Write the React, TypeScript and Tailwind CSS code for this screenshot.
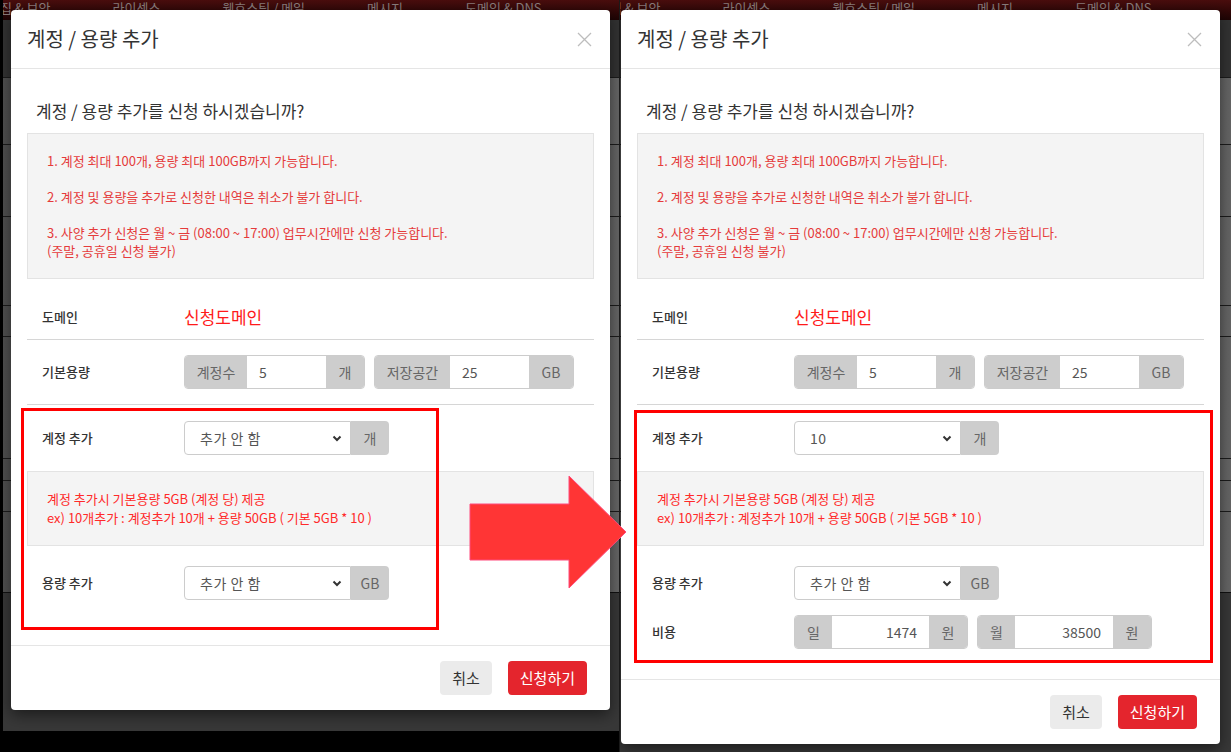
import React from "react";

// ---------------------------------------------------------------------------
// Static data
// ---------------------------------------------------------------------------

const NAV_ITEMS = ["집 & 보안", "라이센스", "웹호스팅 / 메일", "메시지", "도메인 & DNS"];

/** Heights of the darkened page bands behind the modal (px). */
const PAGE_BANDS = [67, 72, 89, 31, 122, 22, 31, 81];

const NOTICE_LINES = [
  "1. 계정 최대 100개, 용량 최대 100GB까지 가능합니다.",
  "",
  "2. 계정 및 용량을 추가로 신청한 내역은 취소가 불가 합니다.",
  "",
  "3. 사양 추가 신청은 월 ~ 금 (08:00 ~ 17:00) 업무시간에만 신청 가능합니다.",
  "(주말, 공휴일 신청 불가)",
];

const ACCOUNT_NOTE = [
  "계정 추가시 기본용량 5GB (계정 당) 제공",
  "ex) 10개추가 : 계정추가 10개 + 용량 50GB ( 기본 5GB * 10 )",
];

// ---------------------------------------------------------------------------
// Small pieces
// ---------------------------------------------------------------------------

function Addon({ className, children }: { className: string; children: React.ReactNode }) {
  return (
    <div className={"flex items-center justify-center bg-[#cdcdcd] text-[14px] text-[#666] " + className}>
      {children}
    </div>
  );
}

function Chevron() {
  return (
    <svg width="10" height="7" viewBox="0 0 10 7" className="shrink-0">
      <polyline points="1.5,1.5 5,5 8.5,1.5" fill="none" stroke="#333" strokeWidth="2" />
    </svg>
  );
}

function SelectGroup({ value, unit }: { value: string; unit: string }) {
  return (
    <div className="flex h-[34px]">
      <div className="flex w-[167px] items-center justify-between rounded-l-[4px] border border-[#cccccc] bg-white pl-[15px] pr-[8px] text-[14px] text-[#555]">
        <span className="tracking-[0.5px]">{value}</span>
        <Chevron />
      </div>
      <Addon className="w-[38px] rounded-r-[4px]">{unit}</Addon>
    </div>
  );
}

function Row({ label, className, children }: { label: string; className: string; children: React.ReactNode }) {
  return (
    <div className={"flex items-center " + className}>
      <div className="w-[157px] shrink-0 pl-[15px] text-[13px] font-medium text-[#333]">{label}</div>
      {children}
    </div>
  );
}

function Backdrop({ navShift }: { navShift: string }) {
  return (
    <div className="flex h-full flex-col">
      <div className="h-[20px] shrink-0 overflow-hidden bg-gradient-to-b from-[#4a0e0e] to-[#1e0404]">
        <div className={"flex gap-[62px] whitespace-nowrap pt-[1px] text-[13px] leading-[13px] text-[#8a7d7d] " + navShift}>
          {NAV_ITEMS.map((item) => (
            <span key={item}>{item}</span>
          ))}
        </div>
      </div>
      <div className="h-[57px] shrink-0 bg-[#333333]" />
      {PAGE_BANDS.map((h, i) => (
        <div
          key={i}
          className="shrink-0 border-t border-[#1c1c1c] bg-gradient-to-r from-[#505050] to-[#666666]"
          style={{ height: h }}
        />
      ))}
      <div className="flex-1 border-t border-[#111] bg-[#383838]" />
    </div>
  );
}

// ---------------------------------------------------------------------------
// Modal
// ---------------------------------------------------------------------------

function Modal({ after }: { after: boolean }) {
  return (
    <div className="relative w-[599px] rounded-[4px] bg-white shadow-[0_5px_15px_rgba(0,0,0,0.5)]">
      {/* header */}
      <div className="flex h-[59px] items-center justify-between border-b border-[#e5e5e5] pl-[16px] pr-[18px]">
        <div className="pb-[1px] text-[20px] text-[#333]">계정 / 용량 추가</div>
        <svg width="15" height="15" viewBox="0 0 15 15">
          <path d="M1 1 L14 14 M14 1 L1 14" stroke="#bdbdbd" strokeWidth="1.3" />
        </svg>
      </div>

      {/* body */}
      <div className={"px-[16px] pt-[29px] " + (after ? "pb-[30px]" : "pb-[45px]")}>
        <div className="pl-[9px] text-[17px] leading-[26px] text-[#333]">계정 / 용량 추가를 신청 하시겠습니까?</div>

        <div className="mt-[9px] border border-[#e3e3e3] bg-[#f4f4f4] px-[19px] py-[18px] text-[13px] leading-[18px] text-[#e53b3b]">
          {NOTICE_LINES.map((line, i) => (
            <div key={i} className="h-[18px]">
              {line}
            </div>
          ))}
        </div>

        <div className="mt-[15px]">
          <Row label="도메인" className="h-[46px] border-b border-[#d6d6d6]">
            <span className="text-[17px] text-[#ff1a1a]">신청도메인</span>
          </Row>

          <Row label="기본용량" className="h-[65px] border-b border-[#d6d6d6]">
            <div className="flex gap-[9px]">
              <div className="flex h-[34px] overflow-hidden rounded-[4px] border border-[#cccccc]">
                <Addon className="w-[62px]">계정수</Addon>
                <div className="flex w-[79px] items-center bg-white pl-[12px] text-[14px] text-[#555]">5</div>
                <Addon className="w-[38px]">개</Addon>
              </div>
              <div className="flex h-[34px] overflow-hidden rounded-[4px] border border-[#cccccc]">
                <Addon className="w-[75px]">저장공간</Addon>
                <div className="flex w-[79px] items-center bg-white pl-[12px] text-[14px] text-[#555]">25</div>
                <Addon className="w-[44px]">GB</Addon>
              </div>
            </div>
          </Row>

          <Row label="계정 추가" className="h-[66px]">
            <SelectGroup value={after ? "10" : "추가 안 함"} unit="개" />
          </Row>

          <div className="border border-[#e3e3e3] bg-[#f4f4f4] px-[19px] py-[18px] text-[13px] leading-[18.5px] text-[#ff2a2a]">
            {ACCOUNT_NOTE.map((line) => (
              <div key={line}>{line}</div>
            ))}
          </div>

          <Row label="용량 추가" className="mt-[20px]">
            <SelectGroup value="추가 안 함" unit="GB" />
          </Row>

          {after && (
            <Row label="비용" className="mt-[15px]">
              <div className="flex gap-[9px]">
                <div className="flex h-[34px] overflow-hidden rounded-[4px] border border-[#cccccc]">
                  <Addon className="w-[37px]">일</Addon>
                  <div className="flex w-[97px] items-center justify-end bg-white pr-[12px] text-[14px] text-[#555]">1474</div>
                  <Addon className="w-[38px]">원</Addon>
                </div>
                <div className="flex h-[34px] overflow-hidden rounded-[4px] border border-[#cccccc]">
                  <Addon className="w-[37px]">월</Addon>
                  <div className="flex w-[98px] items-center justify-end bg-white pr-[12px] text-[14px] text-[#555]">38500</div>
                  <Addon className="w-[38px]">원</Addon>
                </div>
              </div>
            </Row>
          )}
        </div>
      </div>

      {/* footer */}
      <div className="flex h-[65px] items-center justify-end gap-[16px] border-t border-[#e5e5e5] pr-[23px]">
        <button className="h-[34px] rounded-[4px] bg-[#ebebeb] px-[12px] text-[15px] text-[#333]">취소</button>
        <button className="h-[34px] rounded-[4px] bg-[#e4252d] px-[12px] text-[15px] text-white">신청하기</button>
      </div>

      {/* annotation box */}
      {after ? (
        <div className="absolute left-[13px] top-[400px] h-[253px] w-[579px] border-[3px] border-[#ff0000]" />
      ) : (
        <div className="absolute left-[10px] top-[398px] h-[222px] w-[418px] border-[3px] border-[#ff0000]" />
      )}
    </div>
  );
}

// ---------------------------------------------------------------------------
// Page
// ---------------------------------------------------------------------------

export default function App() {
  return (
    <div className="relative flex h-[752px] w-[1231px] items-start overflow-hidden bg-black pl-[3px] font-['Noto_Sans_CJK_KR','Noto_Sans',sans-serif]">
      {/* before */}
      <div className="relative h-[731px] w-[616px] shrink-0 overflow-hidden">
        <Backdrop navShift="-ml-[3px]" />
        <div className="absolute left-[8px] top-[10px]">
          <Modal after={false} />
        </div>
      </div>

      {/* after */}
      <div className="relative h-[752px] w-[612px] shrink-0 overflow-hidden border-l border-[#1a1a1a]">
        <Backdrop navShift="-ml-[10px]" />
        <div className="absolute left-[1px] top-[10px]">
          <Modal after />
        </div>
      </div>

      {/* arrow */}
      <svg className="absolute left-[468px] top-[474px]" width="160" height="116" viewBox="0 0 160 116">
        <polygon
          points="2,30 101,30 101,2 158,58 101,114 101,86 2,86"
          fill="#ff3535"
          stroke="#ff4a7d"
          strokeWidth="1"
        />
      </svg>
    </div>
  );
}
